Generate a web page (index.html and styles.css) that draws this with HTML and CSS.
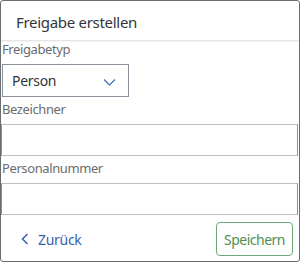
FILE: index.html
```html
<!DOCTYPE html>
<html lang="de">
<head>
    <meta charset="UTF-8">
    <meta name="viewport" content="width=device-width, initial-scale=1.0">
    <title>Freigabe erstellen</title>
    <link rel="stylesheet" href="styles.css">
</head>
<body>
    <div class="dialog">
        <header class="dialog-header">Freigabe erstellen</header>

        <main class="dialog-content">
            <label class="field-label">Freigabetyp</label>
            <div class="select-box">
                <span>Person</span>
                <svg class="select-arrow" width="13" height="8" viewBox="0 0 13 8">
                    <path d="M1 1.5 L6.5 7 L12 1.5" fill="none" stroke="#3a68b0" stroke-width="1.1"/>
                </svg>
            </div>

            <label class="field-label">Bezeichner</label>
            <div class="text-input"></div>

            <label class="field-label">Personalnummer</label>
            <div class="text-input"></div>
        </main>

        <footer class="dialog-footer">
            <a href="#" class="back-link">
                <svg width="8" height="12" viewBox="0 0 8 12">
                    <path d="M6.5 1 L1.5 6 L6.5 11" fill="none" stroke="#3a5fae" stroke-width="1.5"/>
                </svg>
                Zurück
            </a>
            <button class="save-btn">Speichern</button>
        </footer>
    </div>
</body>
</html>
```

FILE: styles.css
```css
/* Grundlayout */
body, html {
    margin: 0;
    padding: 0;
    font-family: "Noto Sans", "Open Sans", sans-serif;
    color: #32363a;
    background-color: #ffffff;
}

.dialog {
    width: 300px;
    height: 262px;
    box-sizing: border-box;
    border: 1px solid #6a6d70;
    border-radius: 3px;
    display: flex;
    flex-direction: column;
    overflow: hidden;
}

/* Kopfzeile */
.dialog-header {
    flex-shrink: 0;
    padding-left: 15px;
    padding-top: 2px;
    box-sizing: border-box;
    height: 40px;
    display: flex;
    align-items: center;
    font-size: 15px;
    letter-spacing: -0.3px;
    color: #32363a;
    border-bottom: 1px solid #e5e5e5;
    box-shadow: 0 1px 1px rgba(0,0,0,0.04);
}

/* Formular */
.dialog-content {
    display: flex;
    flex-direction: column;
    padding: 0 1px 0 0;
}

.field-label {
    display: block;
    font-size: 13px;
    line-height: 16px;
    letter-spacing: -0.4px;
    color: #6a6d70;
    padding-left: 1px;
    margin-top: 4px;
    margin-bottom: 7px;
}

.dialog-content .field-label:first-child {
    margin-top: 0;
}

.select-box {
    width: 127px;
    height: 33px;
    margin-left: 1px;
    box-sizing: border-box;
    border: 1px solid #89919a;
    display: flex;
    align-items: center;
    justify-content: space-between;
    padding: 0 12px 0 9px;
    font-size: 14px;
    letter-spacing: -0.3px;
    color: #32363a;
}

.select-arrow {
    margin-top: 2px;
}

.text-input {
    height: 32px;
    box-sizing: border-box;
    border: 1px solid #bfc2c5;
    border-right-color: #8c9096;
    border-left-color: #8c9096;
}

/* Fußzeile */
.dialog-footer {
    flex-grow: 1;
    display: flex;
    justify-content: space-between;
    align-items: center;
    padding: 2px 6px 0 20px;
}

.back-link {
    display: flex;
    align-items: center;
    gap: 9px;
    font-size: 14px;
    letter-spacing: -0.3px;
    color: #3a5fae;
    text-decoration: none;
}

.save-btn {
    height: 34px;
    width: 77px;
    padding: 0;
    font-family: inherit;
    font-size: 14px;
    letter-spacing: -0.5px;
    color: #4f8f55;
    background-color: #ffffff;
    border: 1px solid #6fa874;
    border-radius: 4px;
}
```
